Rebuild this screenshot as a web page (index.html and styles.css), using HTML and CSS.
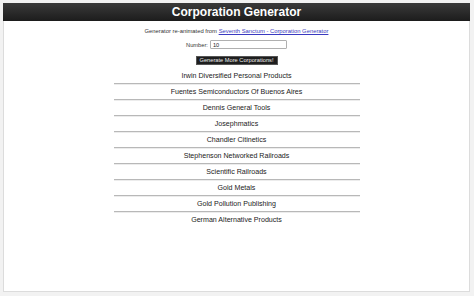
FILE: index.html
```html
<!DOCTYPE html>
<html>
<head>
<meta charset="utf-8">
<title>Corporation Generator</title>
<link rel="stylesheet" href="styles.css">
</head>
<body>
<div class="frame">
  <header class="titlebar">Corporation Generator</header>
  <p class="credit">Generator re-animated from <a href="#">Seventh Sanctum - Corporation Generator</a></p>
  <div class="number-row">
    <label for="num">Number:</label>
    <input id="num" class="num-input" type="text" value="10">
  </div>
  <div class="btn-row"><button class="gen-btn">Generate More Corporations!</button></div>
  <div class="list">
    <p class="corp">Irwin Diversified Personal Products</p><hr class="sep">
    <p class="corp">Fuentes Semiconductors Of Buenos Aires</p><hr class="sep">
    <p class="corp">Dennis General Tools</p><hr class="sep">
    <p class="corp">Josephmatics</p><hr class="sep">
    <p class="corp">Chandler Citinetics</p><hr class="sep">
    <p class="corp">Stephenson Networked Railroads</p><hr class="sep">
    <p class="corp">Scientific Railroads</p><hr class="sep">
    <p class="corp">Gold Metals</p><hr class="sep">
    <p class="corp">Gold Pollution Publishing</p><hr class="sep">
    <p class="corp">German Alternative Products</p>
  </div>
</div>
</body>
</html>
```
FILE: styles.css
```css
html, body {
  margin: 0;
  padding: 0;
}
body {
  background: #f2f2f2;
  font-family: "Liberation Sans", Arial, sans-serif;
  color: #222;
  padding: 3px 4px 4px 3px;
  box-sizing: border-box;
  height: 296px;
}
.frame {
  background: #fff;
  border: 1px solid #dcdcdc;
  border-top: none;
  height: 289px;
  box-sizing: border-box;
  display: flex;
  flex-direction: column;
  align-items: center;
}
.titlebar {
  align-self: stretch;
  margin: 0 -1px;
  height: 18px;
  line-height: 18px;
  background: linear-gradient(#3a3a3a, #1c1c1c);
  color: #fff;
  font-size: 12px;
  font-weight: bold;
  text-align: center;
}
.credit {
  margin: 6px 0 0;
  font-size: 5.85px;
  line-height: 8px;
  color: #333;
}
.credit a {
  color: #3a3ac0;
  text-decoration: underline;
}
.number-row {
  margin-top: 5px;
  display: flex;
  align-items: center;
  gap: 2px;
  font-size: 5.7px;
  color: #333;
  height: 9px;
}
.num-input {
  width: 77px;
  height: 9px;
  box-sizing: border-box;
  border: 1px solid #b0b0b0;
  border-radius: 1px;
  padding: 0 2px;
  font-family: "Liberation Sans", Arial, sans-serif;
  font-size: 5.6px;
  color: #222;
  background: #fff;
}
.btn-row {
  margin-top: 7px;
  display: flex;
}
.gen-btn {
  width: 82px;
  height: 8.5px;
  padding: 0;
  border: 1px solid #555;
  background: #1e1e1e;
  color: #eee;
  font-family: "Liberation Sans", Arial, sans-serif;
  font-size: 5.7px;
  line-height: 6px;
}
.list {
  margin-top: 7px;
  width: 246px;
  display: flex;
  flex-direction: column;
}
.corp {
  margin: 0;
  height: 8px;
  line-height: 8px;
  font-size: 7.1px;
  text-align: center;
  color: #222;
}
.sep {
  margin: 3px 0;
  height: 0;
  border: 0;
  border-top: 1px solid #b8b8b8;
  border-bottom: 1px solid #ececec;
}
```
